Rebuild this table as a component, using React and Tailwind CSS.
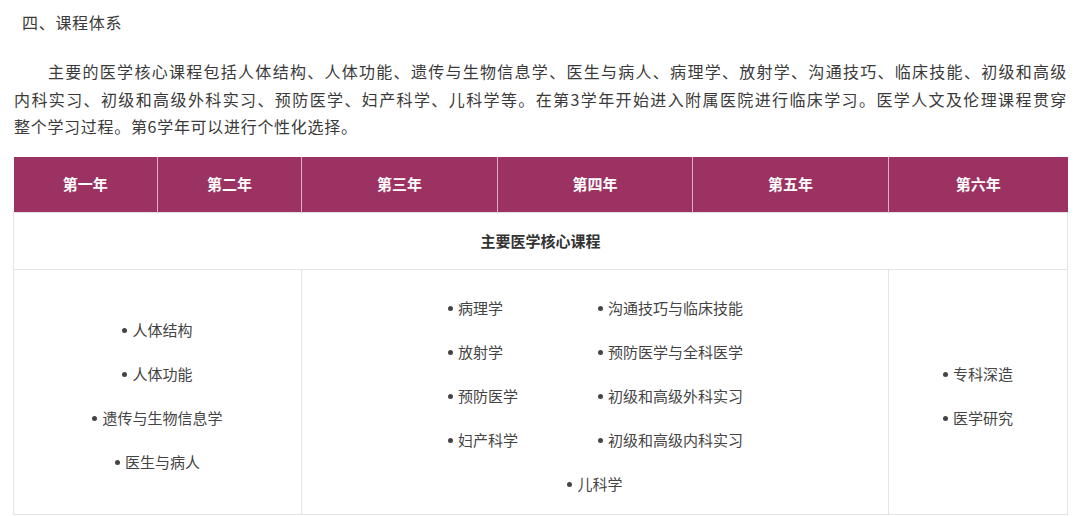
import React from "react";

const font = { fontFamily: '"Noto Sans CJK SC", "Noto Sans", sans-serif' };

function Item({ children }) {
  return (
    <div className="flex items-center h-[44px] whitespace-nowrap">
      <span className="inline-block w-[5px] h-[5px] rounded-full bg-[#444] mr-[5px] shrink-0" />
      <span>{children}</span>
    </div>
  );
}

export default function App() {
  const years = ["第一年", "第二年", "第三年", "第四年", "第五年", "第六年"];
  return (
    <div className="w-[1080px] h-[516px] bg-white overflow-hidden px-[13px] pt-[8px] text-[#3a3a3a]" style={font}>
      <div className="pl-[9px] text-[16px] leading-[28px] tracking-[0.7px]">四、课程体系</div>
      <div className="mt-[22px] pl-px text-[16px] leading-[27.5px] tracking-[0.7px]">
        <div className="pl-[34px] text-justify [text-align-last:justify] whitespace-nowrap">
          主要的医学核心课程包括人体结构、人体功能、遗传与生物信息学、医生与病人、病理学、放射学、沟通技巧、临床技能、初级和高级
        </div>
        <div className="text-justify [text-align-last:justify] whitespace-nowrap">
          内科实习、初级和高级外科实习、预防医学、妇产科学、儿科学等。在第3学年开始进入附属医院进行临床学习。医学人文及伦理课程贯穿
        </div>
        <div>整个学习过程。第6学年可以进行个性化选择。</div>
      </div>
      <table className="mt-[16px] w-[1054px] table-fixed border-collapse text-[15px]">
        <colgroup>
          <col className="w-[144px]" />
          <col className="w-[144px]" />
          <col className="w-[196px]" />
          <col className="w-[195px]" />
          <col className="w-[196px]" />
          <col className="w-[179px]" />
        </colgroup>
        <thead>
          <tr className="h-[56px] bg-[#9b3262]">
            {years.map((y, i) => (
              <th
                key={y}
                className={
                  "text-center font-bold text-white " +
                  (i < 5 ? "border-r border-[#dcb0c3]" : "")
                }
              >
                {y}
              </th>
            ))}
          </tr>
        </thead>
        <tbody>
          <tr className="h-[57px]">
            <td colSpan={6} className="text-center font-bold text-[#333] border border-[#e3e3e3]">
              主要医学核心课程
            </td>
          </tr>
          <tr className="h-[244px] text-[#444]">
            <td colSpan={2} className="align-middle border border-[#e3e3e3] pt-[16px] pb-[8px]">
              <div className="flex flex-col items-center">
                <Item>人体结构</Item>
                <Item>人体功能</Item>
                <Item>遗传与生物信息学</Item>
                <Item>医生与病人</Item>
              </div>
            </td>
            <td colSpan={3} className="align-middle border border-[#e3e3e3] pt-[16px] pb-[8px]">
              <div className="flex flex-col items-center">
                <div className="grid grid-cols-[150px_150px] pl-[6px]">
                  <Item>病理学</Item>
                  <Item>沟通技巧与临床技能</Item>
                  <Item>放射学</Item>
                  <Item>预防医学与全科医学</Item>
                  <Item>预防医学</Item>
                  <Item>初级和高级外科实习</Item>
                  <Item>妇产科学</Item>
                  <Item>初级和高级内科实习</Item>
                </div>
                <Item>儿科学</Item>
              </div>
            </td>
            <td className="align-middle border border-[#e3e3e3] pt-[16px] pb-[8px]">
              <div className="flex flex-col items-center">
                <Item>专科深造</Item>
                <Item>医学研究</Item>
              </div>
            </td>
          </tr>
        </tbody>
      </table>
    </div>
  );
}
